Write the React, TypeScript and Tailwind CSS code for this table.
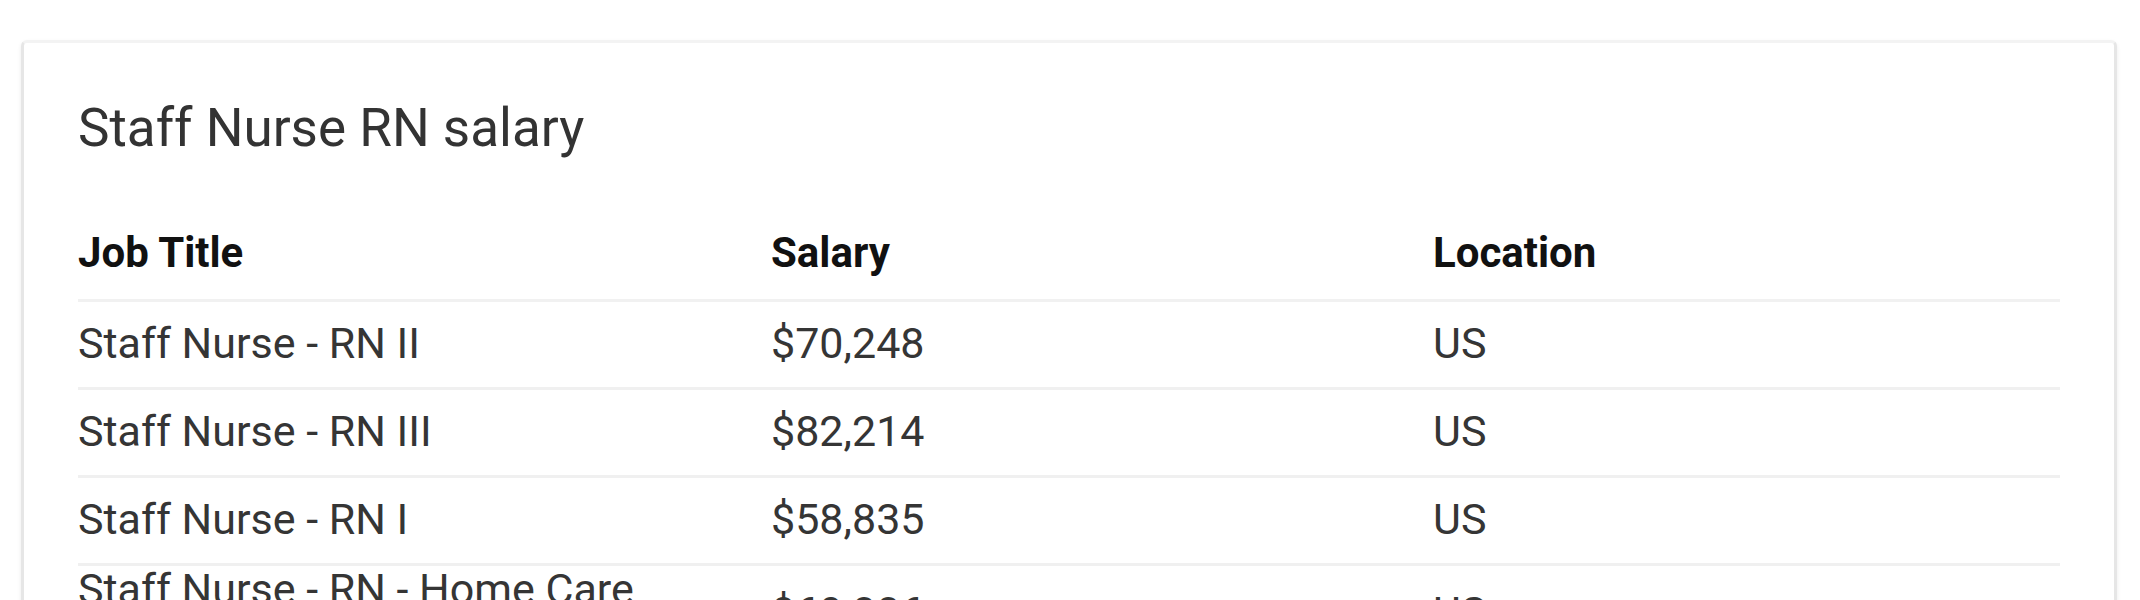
import React from "react";

interface SalaryRow {
  title: string;
  salary: string;
  location: string;
}

const rows: SalaryRow[] = [
  { title: "Staff Nurse - RN II", salary: "$70,248", location: "US" },
  { title: "Staff Nurse - RN III", salary: "$82,214", location: "US" },
  { title: "Staff Nurse - RN I", salary: "$58,835", location: "US" },
  { title: "Staff Nurse - RN - Home Care Services", salary: "$69,006", location: "US" },
];

const App: React.FC = () => {
  return (
    <div className="min-h-[600px] bg-white pt-[40px] pl-[21px] pr-[23px] font-['Roboto',sans-serif]">
      <div className="rounded-[6px] border-x-[3px] border-t-[3px] border-x-[#e6e6e6] border-t-[#f3f3f3] bg-white px-[54px] pt-[55px] pb-10 shadow-[0_2px_4px_rgba(0,0,0,0.08)]">
        <h2 className="text-[53px] leading-[60px] font-normal text-[#333333]">
          Staff Nurse RN salary
        </h2>

        <div className="mt-[47px]">
          <div className="grid grid-cols-[693px_662px_1fr] border-b-[3px] border-[#f1f1f1] pt-[25px] pb-[23px] text-[42px] leading-[46px] font-bold text-[#111111]">
            <div>Job Title</div>
            <div>Salary</div>
            <div>Location</div>
          </div>

          {rows.map((row) => (
            <div
              key={row.title}
              className="grid min-h-[88px] grid-cols-[693px_662px_1fr] items-center border-b-[3px] border-[#f0f0f0] text-[43px] leading-[46px] text-[#353535]"
            >
              <div className="pr-[60px] pb-[3px]">{row.title}</div>
              <div className="pb-[3px]">{row.salary}</div>
              <div className="pb-[3px]">{row.location}</div>
            </div>
          ))}
        </div>
      </div>
    </div>
  );
};

export default App;
